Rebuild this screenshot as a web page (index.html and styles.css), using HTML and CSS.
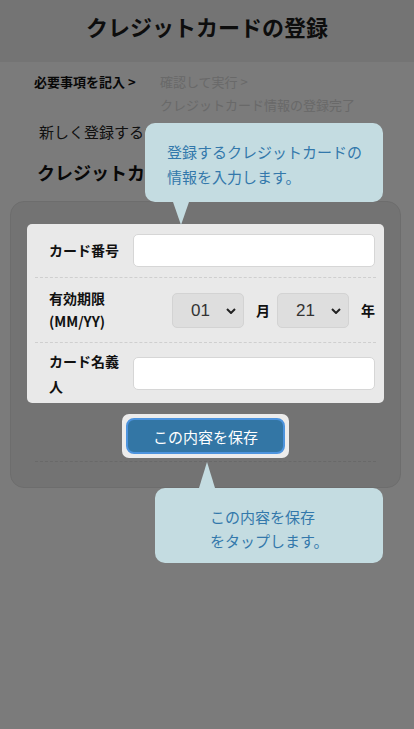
FILE: index.html
```html
<!DOCTYPE html>
<html lang="ja">
<head>
<meta charset="utf-8">
<title>クレジットカードの登録</title>
<link rel="stylesheet" href="styles.css">
</head>
<body>
<header class="top">
  <h1 class="title">クレジットカードの登録</h1>
</header>
<nav class="steps">
  <div class="step-cur">必要事項を記入 &gt;</div>
  <div class="step-next">
    <div>確認して実行 &gt;</div>
    <div>クレジットカード情報の登録完了</div>
  </div>
</nav>
<p class="lead">新しく登録するカード情報を入力してください。</p>
<h2 class="sub">クレジットカード情報</h2>
<section class="card">
  <div class="form spot">
    <div class="row row1">
      <label class="lbl">カード番号</label>
      <input class="field" type="text">
    </div>
    <div class="row row2">
      <label class="lbl">有効期限<br>(MM/YY)</label>
      <div class="exp">
        <span class="sel"><select><option>01</option></select><svg class="chev" viewBox="0 0 10 6" width="10" height="6"><path d="M1 1l4 4 4-4" fill="none" stroke="#222" stroke-width="2"/></svg></span>
        <span class="unit u1">月</span>
        <span class="sel"><select><option>21</option></select><svg class="chev" viewBox="0 0 10 6" width="10" height="6"><path d="M1 1l4 4 4-4" fill="none" stroke="#222" stroke-width="2"/></svg></span>
        <span class="unit u2">年</span>
      </div>
    </div>
    <div class="row row3">
      <label class="lbl">カード名義人</label>
      <input class="field" type="text">
    </div>
  </div>
  <div class="actions">
    <div class="btn-wrap spot"><button class="btn">この内容を保存</button></div>
  </div>
</section>
<div class="overlay"></div>
<div class="tip tip1">登録するクレジットカードの<br>情報を入力します。</div>
<div class="tip tip2">この内容を保存<br>をタップします。</div>
</body>
</html>
```
FILE: styles.css
```css
html, body {
  margin: 0;
  padding: 0;
}
body {
  background: #f6f6f6;
  font-family: "Noto Sans CJK JP", "Noto Sans", sans-serif;
  color: #222;
  min-height: 729px;
  position: relative;
}
.top {
  height: 62px;
  background: #e8e8e8;
  display: flex;
  align-items: center;
  justify-content: center;
}
.title {
  margin: 0;
  font-size: 22px;
  font-weight: bold;
  line-height: 30px;
  color: #1a1a1a;
  position: relative;
  top: -5px;
}
.steps {
  display: flex;
  padding: 8px 0 0 34px;
  font-size: 13px;
  line-height: 23px;
}
.step-cur {
  width: 126px;
  font-weight: bold;
  color: #111;
}
.step-next {
  color: #d2d2d2;
}
.lead {
  margin: 4px 30px 0 39px;
  font-size: 15px;
  line-height: 24px;
  color: #222;
}
.sub {
  margin: 15px 0 0 37px;
  font-size: 18px;
  line-height: 26px;
  font-weight: bold;
  color: #111;
}
.card {
  margin: 16px 13px 0 10px;
  background: #e6e6e6;
  border: 1px solid #dadada;
  border-radius: 14px;
  padding: 22px 16px 25px 16px;
}
.spot {
  position: relative;
  z-index: 11;
}
.form {
  background: #e9e9e9;
  border-radius: 5px;
  padding: 0 8px;
}
.row {
  display: flex;
  align-items: center;
  padding: 0 1px 0 14px;
  border-bottom: 1px dashed #cfcfcf;
}
.row:last-child {
  border-bottom: none;
}
.row1 { height: 53px; }
.row2 { height: 64px; }
.row3 { height: 60px; }
.lbl {
  width: 84px;
  flex: none;
  font-size: 14px;
  font-weight: bold;
  line-height: 23px;
  color: #111;
  padding-right: 6px;
  box-sizing: border-box;
}
.row3 .lbl {
  line-height: 25px;
  margin-top: 2px;
}
.field {
  flex: 1;
  height: 33px;
  box-sizing: border-box;
  border: 1px solid #d6d6d6;
  border-radius: 5px;
  background: #fff;
  margin: 0;
}
.row3 .field {
  margin-top: 1px;
}
.exp {
  flex: 1;
  display: flex;
  align-items: center;
  justify-content: flex-end;
}
.sel {
  position: relative;
  display: block;
  width: 72px;
  height: 35px;
}
.sel select {
  appearance: none;
  -webkit-appearance: none;
  width: 72px;
  height: 35px;
  margin: 0;
  border: 1px solid #d3d3d3;
  border-radius: 5px;
  background: #dedede;
  font-family: "Liberation Sans", Arial, sans-serif;
  font-size: 17px;
  color: #333;
  padding: 0 0 0 18px;
}
.chev {
  position: absolute;
  right: 8px;
  top: 15px;
  pointer-events: none;
}
.unit {
  font-size: 14px;
  font-weight: bold;
  color: #111;
}
.u1 { margin: 0 7px 0 12px; }
.u2 { margin-left: 12px; }
.actions {
  display: flex;
  justify-content: center;
  padding: 11px 0 3px;
  border-bottom: 1px dashed #d2d2d2;
  margin: 0 8px;
}
.btn-wrap {
  background: #ececec;
  border-radius: 7px;
  padding: 4px;
}
.btn {
  display: block;
  width: 159px;
  height: 36px;
  border: 2px solid #4d94de;
  border-radius: 8px;
  background: #3376a5;
  color: #fff;
  font-family: "Noto Sans CJK JP", sans-serif;
  font-size: 15px;
  padding: 0;
}
.overlay {
  position: fixed;
  inset: 0;
  background: rgba(0, 0, 0, 0.5);
  z-index: 10;
}
.tip {
  position: absolute;
  z-index: 12;
  background: #c4dce1;
  color: #3378ab;
  border-radius: 10px;
  font-size: 15px;
  box-sizing: border-box;
}
.tip::after {
  content: "";
  position: absolute;
  width: 0;
  height: 0;
  border-left: 8px solid transparent;
  border-right: 8px solid transparent;
}
.tip1 {
  left: 145px;
  top: 123px;
  width: 238px;
  height: 79px;
  padding: 16px 0 0 22px;
  line-height: 25px;
}
.tip1::after {
  left: 28px;
  top: 79px;
  border-top: 23px solid #c4dce1;
}
.tip2 {
  left: 155px;
  top: 488px;
  width: 228px;
  height: 75px;
  padding: 17px 0 0 55px;
  line-height: 24px;
}
.tip2::after {
  left: 44px;
  top: -26px;
  border-bottom: 26px solid #c4dce1;
}
```
